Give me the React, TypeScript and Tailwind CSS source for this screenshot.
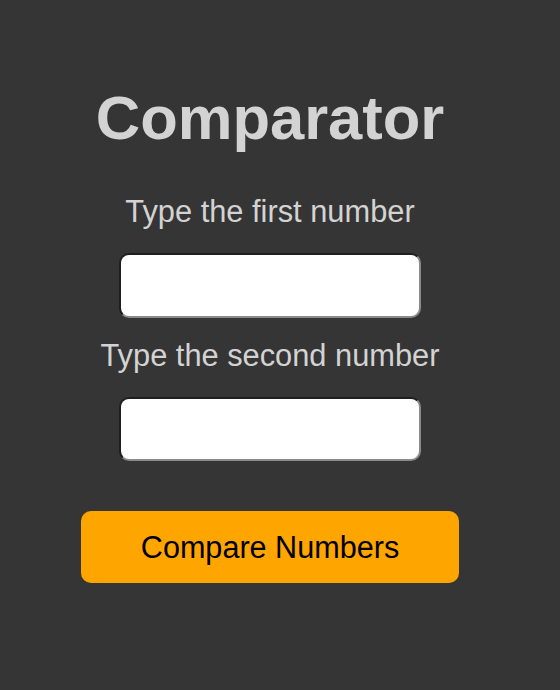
export default function App() {
  return (
    <div className="min-h-[690px] w-[560px] bg-[#353535] font-['Liberation_Sans',Arial,sans-serif]">
      <div className="flex w-[540px] flex-col items-center pt-[84px]">
        <h1 className="text-[61.5px] font-bold leading-[67px] text-[#d3d3d3]">Comparator</h1>

        <label className="mt-[44px] text-[30.8px] leading-[34px] text-[#d3d3d3]">Type the first number</label>
        <input
          type="text"
          className="mt-[24px] h-[65px] w-[302px] rounded-[10px] border-2 border-t-[#1e1e1e] border-l-[#1e1e1e] border-r-[#8a8a8a] border-b-[#8a8a8a] bg-white outline-none"
        />

        <label className="mt-[21px] text-[30.8px] leading-[34px] text-[#d3d3d3]">Type the second number</label>
        <input
          type="text"
          className="mt-[24px] h-[64px] w-[302px] rounded-[10px] border-2 border-t-[#1e1e1e] border-l-[#1e1e1e] border-r-[#8a8a8a] border-b-[#8a8a8a] bg-white outline-none"
        />

        <button className="mt-[50px] h-[72px] w-[378px] rounded-[10px] bg-[#ffa500] text-[30.6px] leading-[34px] text-black">
          Compare Numbers
        </button>
      </div>
    </div>
  );
}
